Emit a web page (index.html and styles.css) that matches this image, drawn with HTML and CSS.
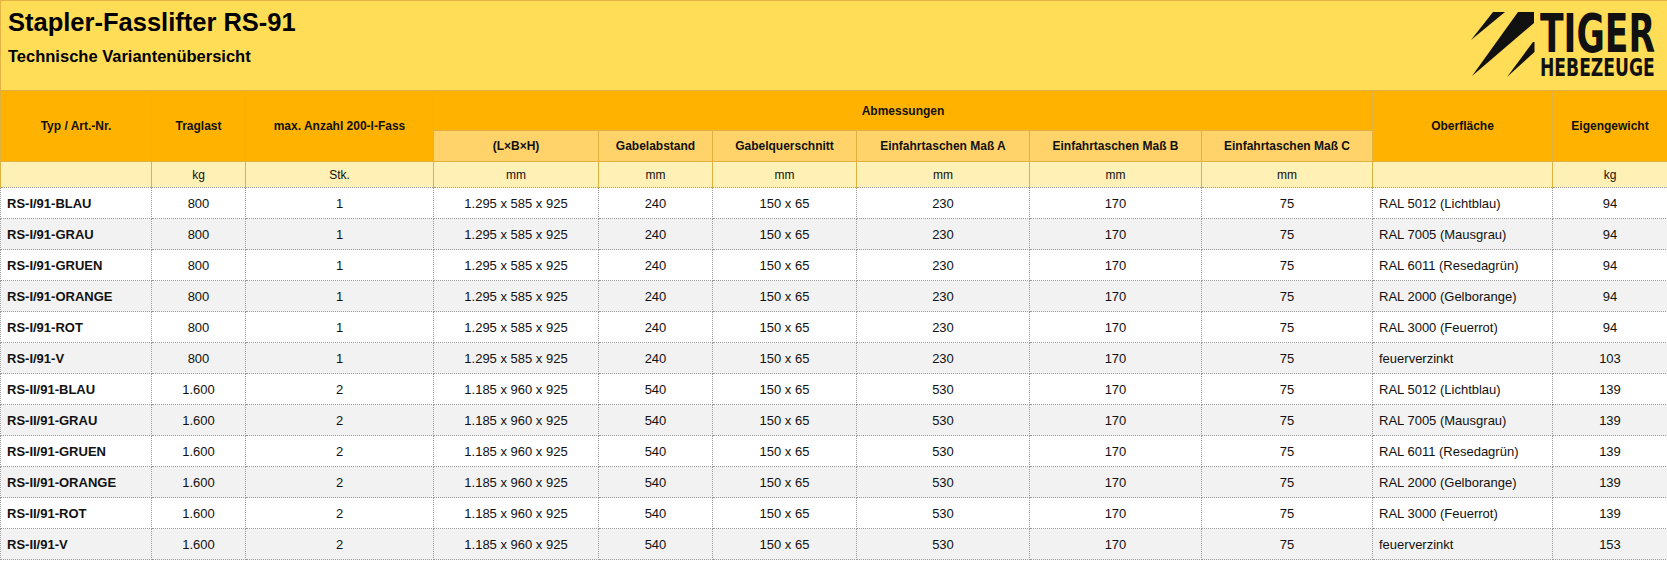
FILE: index.html
```html
<!DOCTYPE html>
<html lang="de">
<head>
<meta charset="utf-8">
<title>Stapler-Fasslifter RS-91</title>
<link rel="stylesheet" href="styles.css">
</head>
<body>
<header class="top">
  <div class="titles">
    <h1 class="title">Stapler-Fasslifter RS-91</h1>
    <h2 class="subtitle">Technische Variantenübersicht</h2>
  </div>
  <div class="logo" aria-label="Tiger Hebezeuge">
    <svg class="claws" width="70" height="70" viewBox="0 0 70 70">
      <polygon points="26,2 38,2 4,30" fill="#111"/>
      <polygon points="51,2 67,2 67,13 5,66" fill="#111"/>
      <polygon points="66,32 67.5,32 67.5,42 40,67" fill="#111"/>
    </svg>
    <div class="brand">
      <span class="brand-big">TIGER</span>
      <span class="brand-small">HEBEZEUGE</span>
    </div>
  </div>
</header>
<table class="specs">
  <colgroup>
    <col style="width:151px"><col style="width:94px"><col style="width:188px"><col style="width:165px"><col style="width:114px"><col style="width:144px"><col style="width:173px"><col style="width:172px"><col style="width:171px"><col style="width:180px"><col style="width:115px">
  </colgroup>
  <thead>
    <tr class="h1">
      <th rowspan="2">Typ / Art.-Nr.</th>
      <th rowspan="2">Traglast</th>
      <th rowspan="2">max. Anzahl 200-l-Fass</th>
      <th colspan="6">Abmessungen</th>
      <th rowspan="2">Oberfläche</th>
      <th rowspan="2">Eigengewicht</th>
    </tr>
    <tr class="h2">
      <th class="sub">(L×B×H)</th>
      <th class="sub">Gabelabstand</th>
      <th class="sub">Gabelquerschnitt</th>
      <th class="sub">Einfahrtaschen Maß A</th>
      <th class="sub">Einfahrtaschen Maß B</th>
      <th class="sub">Einfahrtaschen Maß C</th>
    </tr>
    <tr class="units">
      <td></td><td>kg</td><td>Stk.</td><td>mm</td><td>mm</td><td>mm</td><td>mm</td><td>mm</td><td>mm</td><td></td><td>kg</td>
    </tr>
  </thead>
  <tbody>
    <tr><td class="name">RS-I/91-BLAU</td><td>800</td><td>1</td><td>1.295 x 585 x 925</td><td>240</td><td>150 x 65</td><td>230</td><td>170</td><td>75</td><td class="surf">RAL 5012 (Lichtblau)</td><td>94</td></tr>
    <tr><td class="name">RS-I/91-GRAU</td><td>800</td><td>1</td><td>1.295 x 585 x 925</td><td>240</td><td>150 x 65</td><td>230</td><td>170</td><td>75</td><td class="surf">RAL 7005 (Mausgrau)</td><td>94</td></tr>
    <tr><td class="name">RS-I/91-GRUEN</td><td>800</td><td>1</td><td>1.295 x 585 x 925</td><td>240</td><td>150 x 65</td><td>230</td><td>170</td><td>75</td><td class="surf">RAL 6011 (Resedagrün)</td><td>94</td></tr>
    <tr><td class="name">RS-I/91-ORANGE</td><td>800</td><td>1</td><td>1.295 x 585 x 925</td><td>240</td><td>150 x 65</td><td>230</td><td>170</td><td>75</td><td class="surf">RAL 2000 (Gelborange)</td><td>94</td></tr>
    <tr><td class="name">RS-I/91-ROT</td><td>800</td><td>1</td><td>1.295 x 585 x 925</td><td>240</td><td>150 x 65</td><td>230</td><td>170</td><td>75</td><td class="surf">RAL 3000 (Feuerrot)</td><td>94</td></tr>
    <tr><td class="name">RS-I/91-V</td><td>800</td><td>1</td><td>1.295 x 585 x 925</td><td>240</td><td>150 x 65</td><td>230</td><td>170</td><td>75</td><td class="surf">feuerverzinkt</td><td>103</td></tr>
    <tr><td class="name">RS-II/91-BLAU</td><td>1.600</td><td>2</td><td>1.185 x 960 x 925</td><td>540</td><td>150 x 65</td><td>530</td><td>170</td><td>75</td><td class="surf">RAL 5012 (Lichtblau)</td><td>139</td></tr>
    <tr><td class="name">RS-II/91-GRAU</td><td>1.600</td><td>2</td><td>1.185 x 960 x 925</td><td>540</td><td>150 x 65</td><td>530</td><td>170</td><td>75</td><td class="surf">RAL 7005 (Mausgrau)</td><td>139</td></tr>
    <tr><td class="name">RS-II/91-GRUEN</td><td>1.600</td><td>2</td><td>1.185 x 960 x 925</td><td>540</td><td>150 x 65</td><td>530</td><td>170</td><td>75</td><td class="surf">RAL 6011 (Resedagrün)</td><td>139</td></tr>
    <tr><td class="name">RS-II/91-ORANGE</td><td>1.600</td><td>2</td><td>1.185 x 960 x 925</td><td>540</td><td>150 x 65</td><td>530</td><td>170</td><td>75</td><td class="surf">RAL 2000 (Gelborange)</td><td>139</td></tr>
    <tr><td class="name">RS-II/91-ROT</td><td>1.600</td><td>2</td><td>1.185 x 960 x 925</td><td>540</td><td>150 x 65</td><td>530</td><td>170</td><td>75</td><td class="surf">RAL 3000 (Feuerrot)</td><td>139</td></tr>
    <tr><td class="name">RS-II/91-V</td><td>1.600</td><td>2</td><td>1.185 x 960 x 925</td><td>540</td><td>150 x 65</td><td>530</td><td>170</td><td>75</td><td class="surf">feuerverzinkt</td><td>153</td></tr>
  </tbody>
</table>
</body>
</html>
```

FILE: styles.css
```css
html, body {
  margin: 0;
  padding: 0;
  background: #ffffff;
}
body {
  font-family: "Liberation Sans", Arial, sans-serif;
  color: #111;
  width: 1667px;
}
.top {
  box-sizing: border-box;
  height: 90px;
  background: #ffdd57;
  border-top: 1px solid #e3b443;
  border-left: 1px solid #e3b443;
  display: flex;
  justify-content: space-between;
  align-items: flex-start;
  padding: 6px 8px 0 7px;
}
.title {
  margin: 0;
  font-size: 25.5px;
  line-height: 30px;
  font-weight: bold;
  color: #000;
}
.subtitle {
  margin: 9px 0 0 0;
  font-size: 16.5px;
  line-height: 20px;
  font-weight: bold;
  color: #000;
}
.logo {
  display: flex;
  align-items: flex-start;
}
.claws {
  display: block;
  margin-top: 3px;
}
.brand {
  width: 115px;
  margin-left: 3px;
  margin-right: 4px;
  padding-top: 7px;
  display: flex;
  flex-direction: column;
  align-items: flex-start;
  font-family: "DejaVu Sans", sans-serif;
  font-weight: bold;
  color: #111;
  white-space: nowrap;
}
.brand-big {
  display: block;
  font-size: 53px;
  line-height: 40px;
  transform: scaleX(0.652);
  transform-origin: left center;
}
.brand-small {
  display: block;
  margin-top: 2px;
  font-size: 24.5px;
  line-height: 24px;
  transform: scaleX(0.70);
  transform-origin: left center;
}
.specs {
  width: 1667px;
  table-layout: fixed;
  border-collapse: collapse;
  font-size: 13px;
}
.specs th {
  font-size: 12px;
  font-weight: bold;
  color: #111;
  border: 1px solid #e0b040;
  padding: 0 4px;
  text-align: center;
  vertical-align: middle;
}
.h1 th {
  background: #ffb300;
  height: 39px;
}
.h2 th {
  background: #ffd36a;
  height: 30px;
}
.units td {
  background: #fff0b5;
  border-left: 1px solid #e0b040;
  border-right: 1px solid #e0b040;
  border-top: 1px solid #e0b040;
  border-bottom: none;
  font-size: 12px;
  height: 25px;
  text-align: center;
  padding: 0;
}
.specs tbody td {
  border: 1px dotted #9a9a9a;
  height: 30px;
  padding: 0 6px;
  text-align: center;
  vertical-align: middle;
  color: #111;
}
.specs tbody tr:nth-child(even) td {
  background: #f2f2f2;
}
.specs tbody td.name {
  text-align: left;
  font-weight: bold;
}
.specs tbody td.surf {
  text-align: left;
}
```
